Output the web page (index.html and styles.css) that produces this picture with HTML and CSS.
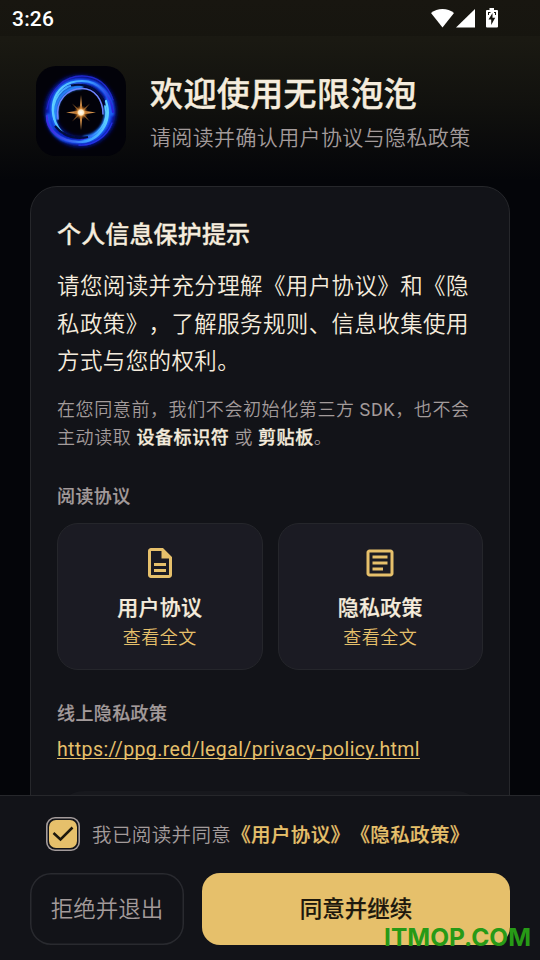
FILE: index.html
```html
<!DOCTYPE html>
<html lang="zh-CN">
<head>
<meta charset="utf-8">
<title>欢迎使用无限泡泡</title>
<link rel="stylesheet" href="styles.css">
</head>
<body>
<div class="screen">
  <div class="status">
    <span class="time">3:26</span>
    <svg class="status-icons" width="68" height="20" viewBox="0 0 68 20" fill="#fff">
      <path d="M0 5Q5 1 11.500 1T23 5L11.500 19.500Z"/>
      <path d="M25 19.500L44 1V19.500Z"/>
      <path fill-rule="evenodd" d="M58.500 0h4.500v2h3q1 0 1 1v15.500q0 1-1 1H56q-1 0-1-1V3q0-1 1-1h2.500zM61.500 5l-4 6.500h2.700V17l4-7.200h-2.700zM57 4v3h1V5h1.500V4zM65 4v3h-1V5h-1V4z"/>
    </svg>
  </div>
  <header class="header">
    <svg class="logo" width="90" height="90" viewBox="0 0 90 90">
      <defs>
        <radialGradient id="core"><stop offset="0" stop-color="#fff"/><stop offset=".35" stop-color="#ffeac0"/><stop offset=".55" stop-color="#d88734" stop-opacity=".75"/><stop offset="1" stop-color="#6b3508" stop-opacity="0"/></radialGradient>
        <linearGradient id="ringA" x1="0" y1=".4" x2="1" y2=".6"><stop stop-color="#5fd2ff"/><stop offset=".5" stop-color="#3a9cff"/><stop offset="1" stop-color="#2a1fd8"/></linearGradient>
        <linearGradient id="ringB" x1="1" y1=".4" x2="0" y2=".7"><stop stop-color="#5fd2ff"/><stop offset=".5" stop-color="#3a9cff"/><stop offset="1" stop-color="#3a1fe0"/></linearGradient>
        <filter id="haze" x="-30%" y="-30%" width="160%" height="160%"><feGaussianBlur stdDeviation="2"/></filter>
        <filter id="soft" x="-20%" y="-20%" width="140%" height="140%"><feGaussianBlur stdDeviation=".9"/></filter>
        <filter id="fine" x="-20%" y="-20%" width="140%" height="140%"><feGaussianBlur stdDeviation=".5"/></filter>
      </defs>
      <rect width="90" height="90" rx="20" fill="#020209"/>
      <circle cx="44.500" cy="45" r="31" fill="none" stroke="#0a1cc0" stroke-width="9" filter="url(#haze)"/>
      <g fill="none" filter="url(#soft)" stroke-linecap="round">
        <path d="M20 60C9 36 22 15 44 15S76 31 76 48" stroke="#1a66f8" stroke-width="4"/>
        <path d="M71 33C80 54 66 76 43 76S13 64 12 49" stroke="#1a5cf8" stroke-width="3.500"/>
        <path d="M20 52C17 33 30 21 45 21" stroke="#2584ff" stroke-width="4.500"/>
        <path d="M70 42C73 58 62 70 49 72" stroke="#2584ff" stroke-width="4.500"/>
      </g>
      <g fill="none" filter="url(#fine)" stroke-linecap="round">
        <path d="M27 67C10 52 13 15 46 15C63 15 75 29 77 46" stroke="url(#ringA)" stroke-width="2.200"/>
        <path d="M18 53C14 34 26 18 45 18" stroke="url(#ringA)" stroke-width="1.800"/>
        <path d="M11 50C10 63 24 76 43 76C62 76 77 57 70 35" stroke="url(#ringB)" stroke-width="2.200"/>
        <path d="M45 73C61 72 74 56 69 40" stroke="url(#ringB)" stroke-width="1.600"/>
        <path d="M11 43C14 24 28 10 46 10S73 22 77 34" stroke="#2028cc" stroke-width="1.300"/>
        <path d="M76 57C71 71 57 80 43 79" stroke="#2430e6" stroke-width="1.300"/>
        <path d="M22 53C19 34 32 22.500 46 22.500C59 22.500 67 34 67 48" stroke="#6d83ff" stroke-width="1.500"/>
      </g>
      <path d="M35 19.500Q56 15 68 35" fill="none" stroke="#03093e" stroke-width="2" filter="url(#fine)"/>
      <path d="M19 60Q31 75 52 71" fill="none" stroke="#03093e" stroke-width="2.200" filter="url(#fine)"/>
      <g filter="url(#fine)">
        <path fill="#d28f48" d="M45 29l1.500 15.500L60 46.500l-13.500 2L45 64l-1.500-15.500L30 46.500l13.500-2z"/>
        <path fill="#8f5c28" d="M36 37.500l9 7.500 9-7.500-7.500 9 7.500 9-9-7.500-9 7.500 7.500-9z"/>
      </g>
      <circle cx="45" cy="46.500" r="7.500" fill="url(#core)"/>
    </svg>
    <div class="heading">
      <h1>欢迎使用无限泡泡</h1>
      <p>请阅读并确认用户协议与隐私政策</p>
    </div>
  </header>
  <main class="content">
    <section class="card">
      <h2>个人信息保护提示</h2>
      <p class="lead">请您阅读并充分理解《用户协议》和《隐私政策》，了解服务规则、信息收集使用方式与您的权利。</p>
      <p class="note">在您同意前，我们不会初始化第三方 <span class="latin">SDK</span>，也不会主动读取 <b>设备标识符</b> 或 <b>剪贴板</b>。</p>
      <h3>阅读协议</h3>
      <div class="docs">
        <div class="doc">
          <svg width="36" height="36" viewBox="0 0 24 24" fill="#e6c06b"><path d="M8 16h8v2H8zm0-4h8v2H8zm6-10H6c-1.100 0-2 .9-2 2v16c0 1.100.89 2 1.990 2H18c1.100 0 2-.9 2-2V8l-6-6zm4 18H6V4h7v5h5v11z"/></svg>
          <strong>用户协议</strong><span>查看全文</span>
        </div>
        <div class="doc">
          <svg width="36" height="36" viewBox="0 0 24 24" fill="#e6c06b"><path d="M19 5v14H5V5h14m0-2H5c-1.100 0-2 .9-2 2v14c0 1.100.9 2 2 2h14c1.100 0 2-.9 2-2V5c0-1.100-.9-2-2-2zm-5 14H7v-2h7v2zm3-4H7v-2h10v2zm0-4H7V7h10v2z"/></svg>
          <strong>隐私政策</strong><span>查看全文</span>
        </div>
      </div>
      <h3 class="online">线上隐私政策</h3>
      <a class="link">https://ppg.red/legal/privacy-policy.html</a>
      <div class="next"></div>
    </section>
  </main>
  <footer class="footer">
    <div class="agree">
      <span class="check"><span class="tick"><svg width="28" height="28" viewBox="0 0 28 28" fill="none" stroke="#1d180d" stroke-width="2.500"><path d="M4.500 13L11.500 19.500 23.500 7.500"/></svg></span></span>
      <span class="agree-text">我已阅读并同意<b>《用户协议》《隐私政策》</b></span>
    </div>
    <div class="actions">
      <div class="btn reject">拒绝并退出</div>
      <div class="btn accept">同意并继续</div>
    </div>
  </footer>
  <div class="watermark">ITMOP.COM</div>
</div>
</body>
</html>
```
FILE: styles.css
```css
* { box-sizing: border-box; }
body { margin: 0; background: #040509; }
h1, h2, h3, p { margin: 0; }
svg { display: block; flex: none; }
.screen {
  position: relative;
  display: flex;
  flex-direction: column;
  width: 540px;
  height: 960px;
  overflow: hidden;
  font-family: Roboto, "Noto Sans CJK SC", sans-serif;
  font-weight: 350;
  text-spacing-trim: space-all;
  color: #f5ecdd;
  background: linear-gradient(#1c1a13 0, #1a1912 40px, #11110e 105px, #040509 180px, #040509 100%);
}
.status {
  display: flex;
  flex: none;
  align-items: center;
  justify-content: space-between;
  height: 36px;
  padding: 1px 41px 0 12px;
  background: rgba(0, 0, 0, .14);
  color: #fff;
}
.time { font-size: 21px; font-weight: 500; letter-spacing: .2px; line-height: 36px; }
.status-icons { margin-bottom: 2px; }
.header { display: flex; flex: none; gap: 24px; height: 150px; padding: 30px 36px; }
.heading { padding-top: 5px; white-space: nowrap; }
h1 { font-size: 33px; font-weight: 500; line-height: 48px; letter-spacing: .4px; -webkit-text-stroke: .4px; }
.heading p { font-size: 21px; line-height: 30px; margin-top: 4px; letter-spacing: .375px; color: #a39b9b; }
.content { flex: 1; min-height: 0; padding: 0 30px; overflow: hidden; }
.card {
  height: 700px;
  padding: 27px 26px;
  border: 1px solid #26272b;
  border-radius: 27px;
  background: #121318;
}
h2 { font-size: 24px; font-weight: 500; line-height: 42px; letter-spacing: .15px; -webkit-text-stroke: .3px; }
.lead { margin-top: 12px; font-size: 22.500px; line-height: 37.500px; letter-spacing: .375px; }
.note { margin-top: 15px; font-size: 18px; line-height: 28px; letter-spacing: .6px; color: #a39b9b; }
.note b { font-weight: 500; color: #f5ecdd; -webkit-text-stroke: .3px; }
.latin { font-weight: 400; }
h3 { margin-top: 31px; font-size: 18px; font-weight: 500; line-height: 27px; letter-spacing: .4px; color: #a39b9b; -webkit-text-stroke: .2px; }
.docs { display: grid; grid-template-columns: 1fr 1fr; gap: 15px; margin-top: 13px; }
.doc {
  display: flex;
  flex-direction: column;
  align-items: center;
  height: 147px;
  padding-top: 21px;
  border: 1px solid #25262b;
  border-radius: 21px;
  background: #1b1b23;
}
.doc strong { margin-top: 11px; font-size: 21px; font-weight: 500; line-height: 32px; letter-spacing: .2px; -webkit-text-stroke: .25px; }
.doc span { font-size: 18px; line-height: 27px; letter-spacing: .5px; color: #e6c06b; }
h3.online { margin-top: 30px; }
.link { display: block; margin-top: 9px; font-size: 19.500px; font-weight: 400; line-height: 28px; letter-spacing: .375px; color: #e6c06b; text-decoration: underline; text-decoration-thickness: 1px; text-underline-offset: 2px; text-decoration-skip-ink: none; }
.next { height: 80px; margin-top: 27px; border-radius: 27px; background: #17181d; }
.footer { flex: none; height: 165px; padding: 21px 30px 0; border-top: 1px solid #26272b; background: #121318; }
.agree { display: flex; align-items: center; height: 34px; padding-left: 16px; }
.check { display: flex; align-items: center; justify-content: center; width: 34px; height: 34px; box-shadow: inset 0 0 0 1.600px #a39b9b; border-radius: 9px; }
.tick { width: 28px; height: 28px; border-radius: 7px; background: #e6c06b; }
.agree-text { margin: 4px 0 0 12px; font-size: 19.500px; line-height: 30px; letter-spacing: .375px; color: #a39b9b; white-space: nowrap; }
.agree-text b { font-weight: 500; color: #e6c06b; -webkit-text-stroke: .2px; }
.actions { display: flex; gap: 18px; margin-top: 22px; }
.btn { height: 72px; border-radius: 18px; font-size: 22.500px; line-height: 73px; text-align: center; }
.reject { width: 154px; box-shadow: inset 0 0 0 1.500px #292a2f; border-radius: 21px; color: #a39b9b; }
.accept { flex: 1; background: #e6c06b; color: #1d180d; font-weight: 500; -webkit-text-stroke: .2px; }
.watermark { position: absolute; right: 9px; bottom: 6px; font: 700 24.500px/34px Inter, sans-serif; color: #279a16; }
```
